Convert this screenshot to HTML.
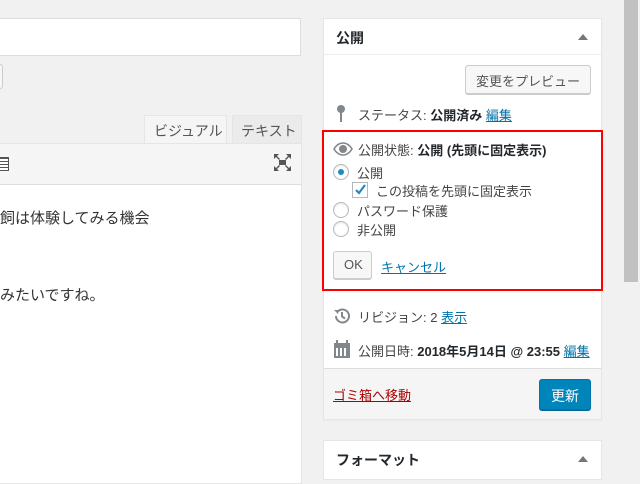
<!DOCTYPE html>
<html><head><meta charset="utf-8"><style>
*{box-sizing:border-box;margin:0;padding:0}
body{width:640px;height:474px;background:#f1f1f1;position:relative;overflow:hidden;font-family:"Liberation Sans","Noto Sans CJK JP",sans-serif;font-size:13px;color:#444}
.a{position:absolute;white-space:nowrap}
a{color:#0073aa;text-decoration:underline}
b{color:#23282d}
.rad{position:absolute;width:16px;height:16px;border:1px solid #b4b9be;border-radius:50%;background:#fff;box-shadow:inset 0 1px 2px rgba(0,0,0,.1)}
</style></head><body>
<div class="a" style="left:-2px;top:18px;width:303px;height:38px;background:#fff;border:1px solid #ddd"></div>
<div class="a" style="left:-6px;top:64px;width:9px;height:25px;background:#f7f7f7;border:1px solid #ccc;border-radius:3px"></div>
<div class="a" style="left:144px;top:115px;width:83px;height:30px;background:#f5f5f5;border:1px solid #e5e5e5;border-bottom:none;font-size:14px;color:#555;padding:5px 0 0 9px">ビジュアル</div>
<div class="a" style="left:232px;top:115px;width:70px;height:29px;background:#ebebeb;border:1px solid #e5e5e5;font-size:14px;color:#555;padding:5px 0 0 8px">テキスト</div>
<div class="a" style="left:-2px;top:143px;width:304px;height:42px;background:#f5f5f5;border:1px solid #e5e5e5"></div>
<div class="a" style="left:-2px;top:184px;width:304px;height:300px;background:#fff;border:1px solid #e5e5e5;border-top:1px solid #ddd"></div>
<div class="a" style="left:0;top:157px;width:9px;height:14px;border:1px solid #555;border-left:none;background:repeating-linear-gradient(#555 0 1px,#fff 1px 3px)"></div>
<svg class="a" style="left:274px;top:154px" width="17" height="17" viewBox="0 0 17 17" fill="#555"><path d="M0 0h5l-2 2 3 3-1 1-3-3-2 2zM17 0v5l-2-2-3 3-1-1 3-3-2-2zM0 17v-5l2 2 3-3 1 1-3 3 2 2zM17 17h-5l2-2-3-3 1-1 3 3 2-2z"/><rect x="5" y="6" width="7" height="5"/></svg>
<div class="a" style="left:0;top:207px;font-size:15px;color:#333">飼は体験してみる機会</div>
<div class="a" style="left:0;top:284px;font-size:15px;color:#333">みたいですね。</div>
<div class="a" style="left:624px;top:0;width:14px;height:282px;background:#c1c1c1"></div>

<div class="a" style="left:323px;top:18px;width:279px;height:402px;background:#fff;border:1px solid #e5e5e5;box-shadow:0 1px 1px rgba(0,0,0,.04)"></div>
<div class="a" style="left:324px;top:54px;width:277px;height:1px;background:#eee"></div>
<div class="a" style="left:336px;top:28px;font-size:14px;font-weight:bold;color:#23282d">公開</div>
<div class="a" style="left:578px;top:34px;border:5px solid transparent;border-bottom:6px solid #72777c;border-top:none"></div>
<div class="a" style="left:465px;top:65px;width:126px;height:29px;background:#f7f7f7;border:1px solid #ccc;border-radius:3px;box-shadow:0 1px 0 #ccc;font-size:13px;color:#555;padding:5px 0 0 10px">変更をプレビュー</div>
<svg class="a" style="left:336px;top:105px" width="10" height="18" viewBox="0 0 10 18"><circle cx="5" cy="4" r="4" fill="#82878c"/><rect x="4" y="6" width="2" height="11" fill="#82878c"/></svg>
<div class="a" style="left:358px;top:105px">ステータス: <b>公開済み</b> <a>編集</a></div>

<div class="a" style="left:322px;top:130px;width:281px;height:161px;border:2px solid #f00"></div>
<svg class="a" style="left:333px;top:142px" width="20" height="14" viewBox="0 0 20 14"><path d="M1 7C4 2 7 1 10 1s6 1 9 6c-3 5-6 6-9 6S4 12 1 7z" fill="none" stroke="#82878c" stroke-width="1.6"/><circle cx="10" cy="7" r="4" fill="#82878c"/></svg>
<div class="a" style="left:358px;top:140px">公開状態: <b>公開 (先頭に固定表示)</b></div>
<div class="rad" style="left:333px;top:164px"><div style="position:absolute;left:4px;top:4px;width:6px;height:6px;border-radius:50%;background:#1e8cbe"></div></div>
<div class="a" style="left:357px;top:163px">公開</div>
<div class="a" style="left:352px;top:182px;width:16px;height:16px;border:1px solid #b4b9be;background:#fff"></div>
<svg class="a" style="left:353px;top:182px" width="15" height="15" viewBox="0 0 15 15"><path d="M3 8l3 3 6-8" fill="none" stroke="#1e8cbe" stroke-width="2.2"/></svg>
<div class="a" style="left:376px;top:181px">この投稿を先頭に固定表示</div>
<div class="rad" style="left:333px;top:202px"></div>
<div class="a" style="left:357px;top:201px">パスワード保護</div>
<div class="rad" style="left:333px;top:221px"></div>
<div class="a" style="left:357px;top:220px">非公開</div>
<div class="a" style="left:333px;top:251px;width:39px;height:28px;background:#f7f7f7;border:1px solid #ccc;border-radius:3px;box-shadow:0 1px 0 #ccc;color:#555;padding:5px 0 0 10px">OK</div>
<div class="a" style="left:381px;top:257px"><a>キャンセル</a></div>

<svg class="a" style="left:333px;top:307px" width="18" height="18" viewBox="0 0 18 18"><path d="M3 9a6.5 6.5 0 1 0 2-4.7" fill="none" stroke="#82878c" stroke-width="2"/><path d="M1 3l5 0-1 4z" fill="#82878c"/><path d="M9 5v4.5l3 2" fill="none" stroke="#82878c" stroke-width="2"/></svg>
<div class="a" style="left:358px;top:307px">リビジョン: 2 <a>表示</a></div>
<svg class="a" style="left:333px;top:340px" width="18" height="18" viewBox="0 0 18 18" fill="#82878c"><rect x="1" y="3" width="16" height="15"/><rect x="3" y="8" width="2" height="8" fill="#fff"/><rect x="7" y="8" width="2" height="8" fill="#fff"/><rect x="11" y="8" width="2" height="8" fill="#fff"/><rect x="3" y="0" width="2" height="4"/><rect x="13" y="0" width="2" height="4"/></svg>
<div class="a" style="left:358px;top:341px">公開日時: <b>2018年5月14日 @ 23:55</b> <a>編集</a></div>
<div class="a" style="left:324px;top:368px;width:277px;height:51px;background:#f5f5f5;border-top:1px solid #ddd"></div>
<div class="a" style="left:333px;top:385px"><a style="color:#a00">ゴミ箱へ移動</a></div>
<div class="a" style="left:539px;top:379px;width:52px;height:31px;background:#0085ba;border:1px solid #0073aa;border-radius:3px;box-shadow:0 1px 0 #006799;color:#fff;font-size:14px;padding:6px 0 0 11px">更新</div>

<div class="a" style="left:323px;top:440px;width:279px;height:40px;background:#fff;border:1px solid #e5e5e5"></div>
<div class="a" style="left:336px;top:450px;font-size:14px;font-weight:bold;color:#23282d">フォーマット</div>
<div class="a" style="left:578px;top:456px;border:5px solid transparent;border-bottom:6px solid #72777c;border-top:none"></div>
</body></html>
